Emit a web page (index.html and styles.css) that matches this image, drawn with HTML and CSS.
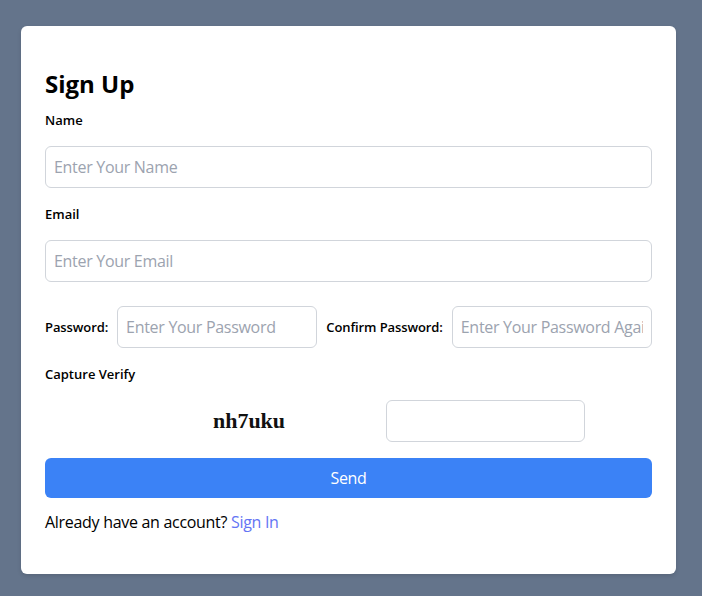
FILE: index.html
```html
<!DOCTYPE html>
<html lang="en">
<head>
<meta charset="utf-8">
<title>Sign Up</title>
<link rel="stylesheet" href="styles.css">
</head>
<body>
<div class="card">
  <h2 class="title">Sign Up</h2>
  <form class="form">
    <label class="label">Name</label>
    <input class="input" type="text" placeholder="Enter Your Name">
    <label class="label">Email</label>
    <input class="input" type="email" placeholder="Enter Your Email">
    <div class="pw-row">
      <label class="label inline">Password:</label>
      <input class="input grow" type="password" placeholder="Enter Your Password">
      <label class="label inline">Confirm Password:</label>
      <input class="input grow" type="password" placeholder="Enter Your Password Again">
    </div>
    <label class="label">Capture Verify</label>
    <div class="captcha-row">
      <span class="captcha">nh7uku</span>
      <input class="input captcha-input" type="text">
    </div>
    <button class="btn" type="button">Send</button>
  </form>
  <p class="footer">Already have an account? <a class="link" href="#">Sign In</a></p>
</div>
</body>
</html>
```

FILE: styles.css
```css
* { box-sizing: border-box; }
html, body { margin: 0; padding: 0; }
body {
  background: #64748b;
  font-family: "Segoe UI", "Open Sans", "Noto Sans", sans-serif;
  height: 596px;
  padding-top: 26px;
  padding-left: 21px;
}
.card {
  width: 655px;
  height: 548px;
  background: #fff;
  border-radius: 6px;
  padding: 42px 24px 40px;
  box-shadow: 0 2px 4px rgba(0,0,0,0.12);
}
.title {
  margin: 0;
  font-size: 24px;
  line-height: 32px;
  font-weight: 700;
  color: #000;
}
.form {
  display: flex;
  flex-direction: column;
}
.label {
  font-size: 13px;
  line-height: 20px;
  font-weight: 600;
  color: #000;
  margin-top: 10px;
  margin-bottom: 16px;
}
.input {
  height: 42px;
  border: 1px solid #d1d5db;
  border-radius: 6px;
  padding: 0 8px;
  font-family: inherit;
  font-size: 16px;
  letter-spacing: -0.3px;
  color: #111;
  outline: none;
  background: #fff;
}
.input::placeholder { color: #9ca3af; }
.form > .input + .label { margin-top: 16px; }
.pw-row {
  display: flex;
  align-items: center;
  gap: 9px;
  margin-top: 24px;
}
.pw-row .label.inline {
  margin: 0;
  white-space: nowrap;
  letter-spacing: -0.1px;
}
.grow { flex: 1 1 0; min-width: 0; }
.pw-row + .label { margin-top: 16px; }
.captcha-row {
  display: flex;
  align-items: center;
  gap: 100px;
  padding-left: 167px;
}
.captcha {
  width: 74px;
  text-align: center;
  font-family: "Liberation Serif", serif;
  font-weight: 700;
  font-size: 22px;
  color: #111;
}
.captcha-input { width: 199px; }
.btn {
  margin-top: 16px;
  height: 40px;
  border: none;
  border-radius: 6px;
  background: #3b82f6;
  color: #fff;
  font-family: inherit;
  font-size: 16px;
  letter-spacing: -0.3px;
}
.footer {
  margin: 12px 0 0;
  font-size: 16px;
  line-height: 24px;
  letter-spacing: -0.3px;
  color: #000;
}
.link {
  color: #6475f4;
  text-decoration: none;
}
```
